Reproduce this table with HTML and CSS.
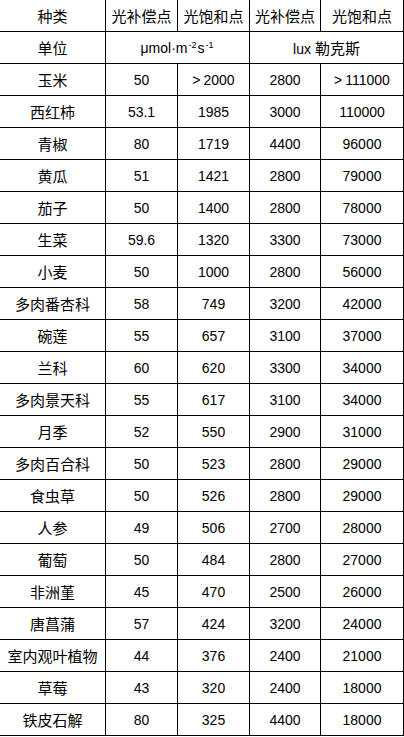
FILE: index.html
```html
<!DOCTYPE html>
<html lang="zh">
<head>
<meta charset="utf-8">
<title>光补偿点与光饱和点</title>
<link rel="stylesheet" href="styles.css">
</head>
<body>
<div class="table">
  <div class="cell zh">种类</div><div class="cell zh">光补偿点</div><div class="cell zh">光饱和点</div><div class="cell zh">光补偿点</div><div class="cell zh">光饱和点</div>
  <div class="cell zh">单位</div><div class="cell span2 unit"><span>μmol·m<sup>-2</sup>s<sup>-1</sup></span></div><div class="cell span2 unit"><span>lux <span class="zh">勒克斯</span></span></div>
  <div class="cell zh">玉米</div><div class="cell">50</div><div class="cell"><span><span class="gt">&gt;</span>2000</span></div><div class="cell">2800</div><div class="cell"><span><span class="gt">&gt;</span>111000</span></div>
  <div class="cell zh">西红柿</div><div class="cell">53.1</div><div class="cell">1985</div><div class="cell">3000</div><div class="cell">110000</div>
  <div class="cell zh">青椒</div><div class="cell">80</div><div class="cell">1719</div><div class="cell">4400</div><div class="cell">96000</div>
  <div class="cell zh">黄瓜</div><div class="cell">51</div><div class="cell">1421</div><div class="cell">2800</div><div class="cell">79000</div>
  <div class="cell zh">茄子</div><div class="cell">50</div><div class="cell">1400</div><div class="cell">2800</div><div class="cell">78000</div>
  <div class="cell zh">生菜</div><div class="cell">59.6</div><div class="cell">1320</div><div class="cell">3300</div><div class="cell">73000</div>
  <div class="cell zh">小麦</div><div class="cell">50</div><div class="cell">1000</div><div class="cell">2800</div><div class="cell">56000</div>
  <div class="cell zh">多肉番杏科</div><div class="cell">58</div><div class="cell">749</div><div class="cell">3200</div><div class="cell">42000</div>
  <div class="cell zh">碗莲</div><div class="cell">55</div><div class="cell">657</div><div class="cell">3100</div><div class="cell">37000</div>
  <div class="cell zh">兰科</div><div class="cell">60</div><div class="cell">620</div><div class="cell">3300</div><div class="cell">34000</div>
  <div class="cell zh">多肉景天科</div><div class="cell">55</div><div class="cell">617</div><div class="cell">3100</div><div class="cell">34000</div>
  <div class="cell zh">月季</div><div class="cell">52</div><div class="cell">550</div><div class="cell">2900</div><div class="cell">31000</div>
  <div class="cell zh">多肉百合科</div><div class="cell">50</div><div class="cell">523</div><div class="cell">2800</div><div class="cell">29000</div>
  <div class="cell zh">食虫草</div><div class="cell">50</div><div class="cell">526</div><div class="cell">2800</div><div class="cell">29000</div>
  <div class="cell zh">人参</div><div class="cell">49</div><div class="cell">506</div><div class="cell">2700</div><div class="cell">28000</div>
  <div class="cell zh">葡萄</div><div class="cell">50</div><div class="cell">484</div><div class="cell">2800</div><div class="cell">27000</div>
  <div class="cell zh">非洲堇</div><div class="cell">45</div><div class="cell">470</div><div class="cell">2500</div><div class="cell">26000</div>
  <div class="cell zh">唐菖蒲</div><div class="cell">57</div><div class="cell">424</div><div class="cell">3200</div><div class="cell">24000</div>
  <div class="cell zh">室内观叶植物</div><div class="cell">44</div><div class="cell">376</div><div class="cell">2400</div><div class="cell">21000</div>
  <div class="cell zh">草莓</div><div class="cell">43</div><div class="cell">320</div><div class="cell">2400</div><div class="cell">18000</div>
  <div class="cell zh">铁皮石解</div><div class="cell">80</div><div class="cell">325</div><div class="cell">4400</div><div class="cell">18000</div>
</div>
</body>
</html>
```
FILE: styles.css
```css
html, body {
  margin: 0;
  padding: 0;
  background: #ffffff;
}

.table {
  display: grid;
  grid-template-columns: 105px 71px 71px 70px 82px;
  grid-auto-rows: 31px;
  gap: 1px;
  padding: 0 1px 1px 0;
  width: 404px;
  box-sizing: border-box;
  background: #000000;
}

.cell {
  background: #ffffff;
  display: flex;
  align-items: center;
  justify-content: center;
  font-family: "Liberation Sans", "Noto Sans CJK SC", sans-serif;
  font-size: 14px;
  color: #000000;
  white-space: nowrap;
  line-height: 1;
}

.zh {
  font-family: "Noto Sans CJK SC", sans-serif;
  font-size: 15px;
}

.span2 {
  grid-column: span 2;
}

.unit {
  font-size: 14px;
}

.unit sup {
  font-size: 9px;
  position: relative;
  top: -5px;
  vertical-align: baseline;
  margin: 0 1px;
}

.gt {
  margin-right: 3px;
}
```
